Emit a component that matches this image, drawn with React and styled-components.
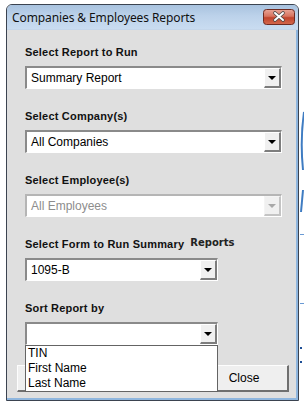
import React from 'react'
import { styled, createGlobalStyle } from 'styled-components'

const Global = createGlobalStyle`
  html, body { margin: 0; padding: 0; background: #fff; }
  body { width: 304px; height: 409px; overflow: hidden; }
`

const selects = [
  { label: 'Select Report to Run', value: 'Summary Report', wide: true },
  { label: 'Select Company(s)', value: 'All Companies', wide: true },
  { label: 'Select Employee(s)', value: 'All Employees', wide: true, disabled: true },
  { label: 'Select Form to Run Summary', extra: 'Reports', value: '1095-B' },
  { label: 'Sort Report by', value: '', open: ['TIN', 'First Name', 'Last Name'] },
]

const Page = () => (
  <Desk>
    <Global />
    <Window>
      <TitleBar>
        <Title>Companies &amp; Employees Reports</Title>
        <CloseX aria-label="close">
          <svg width="32" height="16" viewBox="0 0 32 16">
            <defs>
              <linearGradient id="cx" x1="0" y1="0" x2="0" y2="1">
                <stop offset="0" stopColor="#e9a597" />
                <stop offset="0.45" stopColor="#d7735f" />
                <stop offset="0.55" stopColor="#c0432c" />
                <stop offset="1" stopColor="#d46a4f" />
              </linearGradient>
            </defs>
            <rect x="0.5" y="0.5" width="31" height="15" rx="3" fill="url(#cx)" stroke="#6e2b22" />
            <path d="M12 4 L20 11 M20 4 L12 11" stroke="#4a4a4a" strokeWidth="3.6" strokeLinecap="round" />
            <path d="M12 4 L20 11 M20 4 L12 11" stroke="#fff" strokeWidth="2" strokeLinecap="round" />
          </svg>
        </CloseX>
      </TitleBar>
      <Body>
        {selects.map((s) => (
          <Field key={s.label}>
            <Label>
              {s.label}
              {s.extra && <Extra>{s.extra}</Extra>}
            </Label>
            <Combo $wide={s.wide} $disabled={s.disabled}>
              <ComboText $disabled={s.disabled}>{s.value}</ComboText>
              <ArrowBtn $disabled={s.disabled}>
                <Tri $disabled={s.disabled} />
              </ArrowBtn>
              {s.open && (
                <DropList>
                  {s.open.map((o) => (
                    <DropItem key={o}>{o}</DropItem>
                  ))}
                </DropList>
              )}
            </Combo>
          </Field>
        ))}
        <Buttons>
          {/* left button's caption sits under the open list */}
          <Btn />
          <Btn>Close</Btn>
        </Buttons>
      </Body>
    </Window>
    <Backdrop>
      <svg width="5" height="409" viewBox="0 0 5 409">
        <path d="M5 112 Q1 140 4 170" stroke="#3f7cc2" strokeWidth="2" fill="none" />
        <path d="M2 212 L4 190" stroke="#3f7cc2" strokeWidth="2" fill="none" />
        <rect x="1" y="234" width="4" height="1" fill="#6a9ad4" />
        <rect x="1" y="303" width="4" height="1" fill="#6a9ad4" />
        <rect x="1" y="347" width="2" height="2" fill="#1e4f96" />
        <rect x="1" y="361" width="2" height="2" fill="#1e4f96" />
      </svg>
    </Backdrop>
  </Desk>
)

export default function App() {
  return <Page />
}

const Desk = styled.div`
  display: flex;
  align-items: flex-start;
  padding: 4px 0 0 6px;
  height: 409px;
  box-sizing: border-box;
`

const Window = styled.div`
  width: 294px;
  height: 397px;
  box-sizing: border-box;
  border: 1px solid #3b4350;
  border-radius: 6px 6px 0 0;
  display: flex;
  flex-direction: column;
  overflow: hidden;
  background: #dfdfdf;
`

const TitleBar = styled.div`
  height: 24px;
  flex: none;
  display: flex;
  align-items: center;
  justify-content: space-between;
  padding: 0 3px 0 5px;
  background: linear-gradient(#a8c2df 0%, #bcd2ea 45%, #c9dcf1 100%);
  border-bottom: 1px solid #c4d6ea;
`

const Title = styled.div`
  font-family: 'Noto Sans', 'Open Sans', sans-serif;
  font-size: 12px;
  color: #111;
  letter-spacing: -0.1px;
  padding-top: 1px;
`

const CloseX = styled.div`
  width: 32px;
  height: 16px;
  margin-top: -1px;
  display: flex;
`

const Body = styled.div`
  flex: 1;
  padding: 16px 15px 0 18px;
  border-right: 2px solid #8fb6de;
  border-bottom: 2px solid #8fb6de;
  display: flex;
  flex-direction: column;
  gap: 21px;
`

const Field = styled.div`
  display: flex;
  flex-direction: column;
  gap: 7px;
`

const Label = styled.div`
  font-family: 'Liberation Sans', Arial, sans-serif;
  font-weight: bold;
  font-size: 11px;
  letter-spacing: 0.2px;
  line-height: 13px;
  height: 13px;
  color: #111;
`

const Extra = styled.span`
  font-family: 'DejaVu Sans', sans-serif;
  font-weight: 600;
  font-size: 10px;
  letter-spacing: 0;
  margin-left: 6px;
  position: relative;
  top: -2px;
  color: #222;
`

const Combo = styled.div`
  position: relative;
  width: ${(p) => (p.$wide ? '257px' : '193px')};
  height: 23px;
  box-sizing: border-box;
  background: #fff;
  border-style: solid;
  border-width: 2px 1px 1px 2px;
  border-color: ${(p) => (p.$disabled ? '#b5b5b5 #fff #fff #b5b5b5' : '#8a8a8a #fff #fff #8a8a8a')};
  display: flex;
  align-items: center;
  justify-content: space-between;
`

const ComboText = styled.div`
  font-family: 'Liberation Sans', Arial, sans-serif;
  font-size: 12px;
  padding-left: 4px;
  color: ${(p) => (p.$disabled ? '#8d8d8d' : '#000')};
`

const ArrowBtn = styled.div`
  width: 17px;
  height: 20px;
  box-sizing: border-box;
  align-self: flex-start;
  background: #f0f0f0;
  border-style: solid;
  border-width: 1px 2px 2px 1px;
  border-color: ${(p) => (p.$disabled ? '#f4f4f4 #c4c4c4 #c4c4c4 #f4f4f4' : '#fff #7d7d7d #7d7d7d #fff')};
  display: flex;
  align-items: center;
  justify-content: center;
`

const Tri = styled.div`
  width: 0;
  height: 0;
  border-left: 4px solid transparent;
  border-right: 4px solid transparent;
  border-top: 4px solid ${(p) => (p.$disabled ? '#a8a8a8' : '#000')};
  margin-top: 1px;
`

const DropList = styled.div`
  position: absolute;
  left: -2px;
  top: 21px;
  width: 193px;
  box-sizing: border-box;
  background: #fff;
  border: 1px solid #646464;
  z-index: 2;
`

const DropItem = styled.div`
  font-family: 'Liberation Sans', Arial, sans-serif;
  font-size: 12px;
  line-height: 15px;
  padding-left: 2px;
  color: #000;
`

const Buttons = styled.div`
  display: flex;
  justify-content: space-between;
  margin: -1px -8px 0 -8px;
`

const Btn = styled.div`
  width: 89px;
  height: 27px;
  box-sizing: border-box;
  background: #efefef;
  border-style: solid;
  border-width: 1px 2px 2px 1px;
  border-color: #fdfdfd #6f6f6f #6f6f6f #fdfdfd;
  font-family: 'Liberation Sans', Arial, sans-serif;
  font-size: 12px;
  color: #000;
  display: flex;
  align-items: center;
  justify-content: center;
`

const Backdrop = styled.div`
  width: 5px;
  flex: none;
  margin-top: -4px;
  display: flex;
`
